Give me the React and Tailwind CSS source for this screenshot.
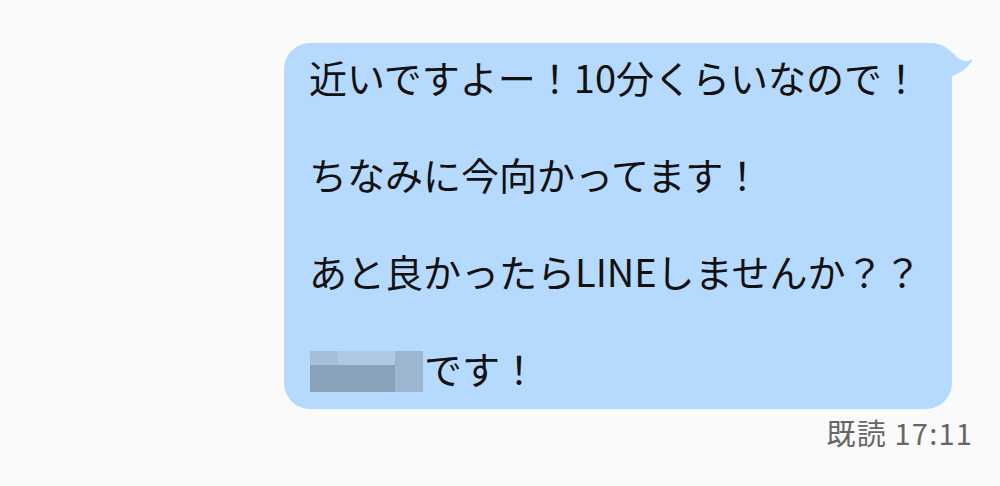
export default function App() {
  const font = { fontFamily: '"Noto Sans CJK JP", "Noto Sans", sans-serif' };
  return (
    <div className="w-[1000px] h-[486px] bg-[#fafafa] flex flex-col items-end pt-[43px] overflow-hidden" style={font}>
      <div className="relative mr-[48px] w-[668px] bg-[#b6dafd] rounded-[26px] pl-[25px] pr-[10px] pt-[10px] pb-[16px] text-[38px] leading-[48.5px] text-[#111]">
        <svg className="absolute top-0 right-[-22px]" width="52" height="40" viewBox="0 0 52 40">
          <path d="M0 0 L8 0 C22 0 29 8 35 14 C40 19 46 19 51 16 C47 24 39 30 30 33 L30 40 L0 40 Z" fill="#b6dafd" />
        </svg>
        <p className="relative whitespace-nowrap">近いですよー！10分くらいなので！</p>
        <p className="h-[48.5px]"></p>
        <p className="relative whitespace-nowrap">ちなみに今向かってます！</p>
        <p className="h-[48.5px]"></p>
        <p className="relative whitespace-nowrap">あと良かったらLINEしませんか？？</p>
        <p className="h-[48.5px]"></p>
        <div className="relative flex items-center h-[48.5px]">
          <div className="grid grid-cols-[28px_57px_28px] grid-rows-[14px_27px] ml-[1px] mr-[1px] mt-[7px]">
            <div className="bg-[#a6bed6]"></div>
            <div className="bg-[#b0c9e2]"></div>
            <div className="bg-[#9db6cf] row-span-2"></div>
            <div className="bg-[#8aa2b9] col-span-2"></div>
          </div>
          <span>です！</span>
        </div>
      </div>
      <div className="mt-[7px] mr-[27px] text-[29px] leading-[32px] tracking-[1.2px] text-[#666]">既読 17:11</div>
    </div>
  );
}
